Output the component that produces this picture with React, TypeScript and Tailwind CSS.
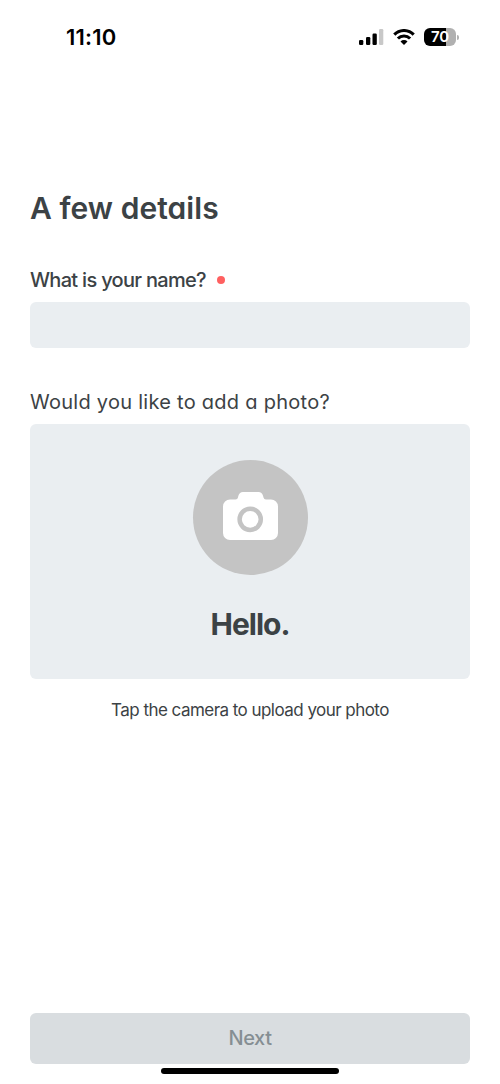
const signalBars = [
  { x: 0, y: 11, height: 5, fill: "#000" },
  { x: 7, y: 8, height: 8, fill: "#000" },
  { x: 13.5, y: 4.5, height: 11.5, fill: "#000" },
  { x: 20, y: 0, height: 16, fill: "#c8c8c8" },
];

function StatusBar() {
  return (
    <header className="flex h-[74px] items-center justify-between pl-[66px] pr-[41px]">
      <span className="text-[22px] leading-[26px] font-semibold tracking-[0.2px] text-black">
        11:10
      </span>
      <div className="flex items-center">
        <svg className="h-4 w-[25px]" viewBox="0 0 25 16">
          {signalBars.map((bar) => (
            <rect
              key={bar.x}
              x={bar.x}
              y={bar.y}
              width="4.3"
              height={bar.height}
              rx="1.2"
              fill={bar.fill}
            />
          ))}
        </svg>
        <svg className="ml-[9px] h-4 w-[22px]" viewBox="0 0 22 16">
          <g fill="none" stroke="#000" strokeWidth="3.1">
            <path d="M1.3 5.6a13.6 13.6 0 0 1 19.4 0" />
            <path d="M4.9 9.5a8.6 8.6 0 0 1 12.2 0" />
          </g>
          <path d="M11 16 7.5 12.5a4.95 4.95 0 0 1 7 0Z" />
        </svg>
        <div className="ml-[9px] flex h-[18px] w-8 items-center justify-center rounded-md bg-linear-to-r from-black from-70% to-[#b0b0b0] to-70%">
          <span className="text-[15px] leading-[18px] font-semibold tracking-[-0.2px] text-white">
            70
          </span>
        </div>
        <div className="ml-px h-[5px] w-[2px] rounded-r-full bg-[#b0b0b0]" />
      </div>
    </header>
  );
}

function CameraButton() {
  return (
    <button
      aria-label="Upload photo"
      className="flex h-[115px] w-[115px] shrink-0 items-center justify-center rounded-full bg-[#c4c4c4] pb-[3px]"
    >
      <svg className="h-12 w-[55px]" viewBox="0 0 55 48">
        <path
          d="M7 7.5h5.5q2 0 2.5-2L15.3 4Q16.5 0 20 0h15.5q3.5 0 4.6 4l.4 1.5q.5 2 2.5 2H48a7 7 0 0 1 7 7V41a7 7 0 0 1-7 7H7a7 7 0 0 1-7-7V14.5a7 7 0 0 1 7-7Z"
          fill="#fff"
        />
        <circle cx="27.2" cy="27.3" r="10.6" fill="#fff" stroke="#c4c4c4" strokeWidth="4.5" />
      </svg>
    </button>
  );
}

export default function App() {
  return (
    <div className="flex h-[1084px] w-[500px] flex-col bg-white font-['Inter','Liberation_Sans',sans-serif] text-[#3c4245]">
      <StatusBar />

      <main className="flex flex-1 flex-col px-[30px] pt-[114px]">
        <h1 className="h-10 text-[30px] leading-10 font-semibold tracking-[0.05px] whitespace-nowrap [font-feature-settings:'cv11']">
          A few details
        </h1>

        <label
          htmlFor="name"
          className="mt-[38px] flex h-7 items-center text-xl leading-7 font-medium tracking-[-0.7px]"
        >
          What is your name?
          <span className="ml-[11px] h-2 w-2 rounded-full bg-[#ff6060]" />
        </label>
        <input
          id="name"
          className="mt-2 h-[46px] w-full rounded-md bg-[#eaeef1] px-3 text-lg outline-none"
        />

        <h2 className="mt-10 h-7 text-xl leading-7 tracking-[0.27px] whitespace-nowrap [font-feature-settings:'cv11']">
          Would you like to add a photo?
        </h2>
        <section className="mt-2 flex h-[255px] w-full flex-col items-center rounded-md bg-[#eaeef1] pt-9">
          <CameraButton />
          <p className="mt-[29px] text-[30px] leading-10 font-bold tracking-[-1px]">Hello.</p>
        </section>
        <p className="mt-[17px] text-center text-[17px] leading-7 tracking-[-0.54px]">
          Tap the camera to upload your photo
        </p>
      </main>

      <footer className="flex flex-col items-center px-[30px] pb-[10px]">
        <button
          disabled
          className="h-[51px] w-full rounded-md bg-[#d9dde0] pb-px text-xl font-medium tracking-[-0.4px] text-[#858e93]"
        >
          Next
        </button>
        <div className="mt-1 h-[6px] w-[178px] rounded-full bg-black" />
      </footer>
    </div>
  );
}
